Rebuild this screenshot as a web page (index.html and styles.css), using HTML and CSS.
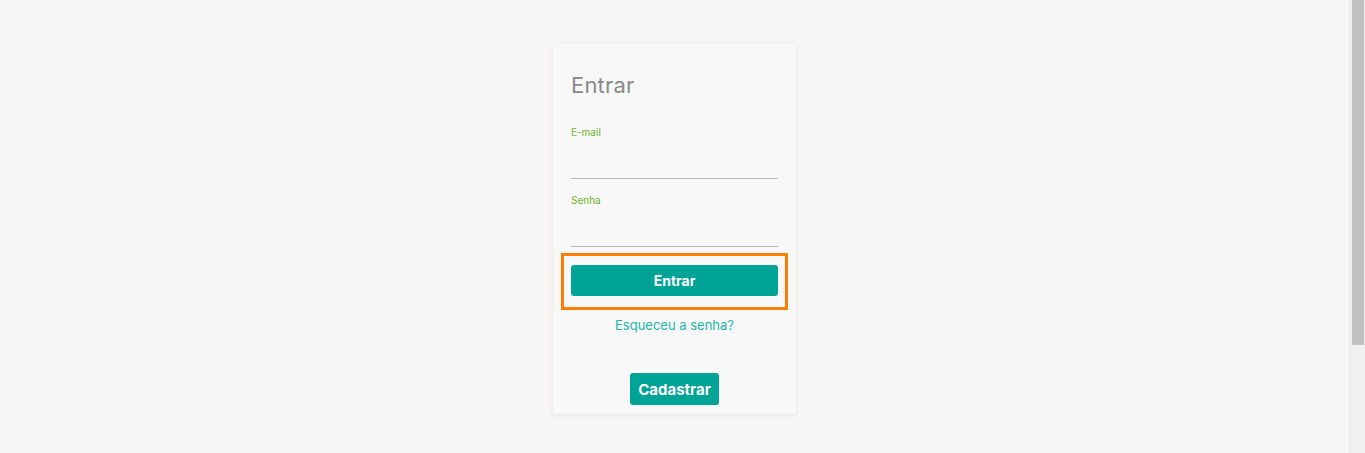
FILE: index.html
```html
<!DOCTYPE html>
<html lang="pt-BR">
<head>
<meta charset="utf-8">
<title>Entrar</title>
<link rel="stylesheet" href="styles.css">
</head>
<body>
<div class="viewport">
  <main class="page">
    <form class="card" onsubmit="return false">
      <h1 class="title">Entrar</h1>
      <div class="field">
        <label class="label" for="email">E-mail</label>
        <input class="input" id="email" type="email">
      </div>
      <div class="field">
        <label class="label" for="senha">Senha</label>
        <input class="input" id="senha" type="password">
      </div>
      <div class="highlight">
        <button class="btn btn-block" type="submit">Entrar</button>
      </div>
      <a class="forgot" href="#">Esqueceu a senha?</a>
      <div class="signup">
        <button class="btn btn-small" type="button">Cadastrar</button>
      </div>
    </form>
  </main>
  <div class="scrollbar" aria-hidden="true">
    <div class="thumb"></div>
  </div>
</div>
</body>
</html>
```
FILE: styles.css
```css
html, body {
  margin: 0;
  padding: 0;
  background: #f7f6f4;
  font-family: Inter, "Noto Sans", "Liberation Sans", sans-serif;
  overflow: hidden;
}
.viewport {
  display: flex;
  height: 453px;
}
.page {
  flex: 1;
  padding-top: 44px;
  box-sizing: border-box;
}
.scrollbar {
  width: 16px;
  background: #f1f1f1;
  border-left: 1px solid #ebebeb;
  box-sizing: border-box;
  padding: 0 1px 0 2px;
}
.thumb {
  height: 345px;
  background: #c1c1c1;
}
.card {
  width: 243px;
  margin: 0 auto;
  box-sizing: border-box;
  padding: 27px 18px 9px;
  background: #f8f8f8;
  box-shadow: 0 1px 4px rgba(0, 0, 0, 0.09);
  display: flex;
  flex-direction: column;
}
.title {
  margin: 0;
  font-size: 22px;
  line-height: 28px;
  font-weight: 400;
  color: #8a8a8a;
  letter-spacing: 0.2px;
}
.field {
  display: flex;
  flex-direction: column;
  margin-top: 26px;
}
.field + .field {
  margin-top: 14px;
}
.label {
  font-size: 10px;
  line-height: 14px;
  color: #6db52a;
}
.input {
  border: 0;
  border-bottom: 1px solid #b9b9b9;
  background: transparent;
  height: 39px;
  padding: 0;
  outline: none;
  font: inherit;
}
.highlight {
  margin: 6px -10px 0;
  border: 3px solid #ff8000;
  padding: 9px 7px 11px;
}
.btn {
  border: 0;
  background: #00a497;
  color: #fff;
  font-family: inherit;
  font-weight: 700;
  border-radius: 3px;
  cursor: pointer;
}
.btn-block {
  display: block;
  width: 100%;
  height: 31px;
  font-size: 14px;
}
.forgot {
  align-self: center;
  margin-top: 7px;
  font-size: 13px;
  line-height: 16px;
  color: #1fb6a8;
  text-decoration: none;
}
.signup {
  display: flex;
  justify-content: center;
  margin-top: 40px;
}
.btn-small {
  width: 89px;
  height: 32px;
  font-size: 15px;
  padding: 0;
}
```
